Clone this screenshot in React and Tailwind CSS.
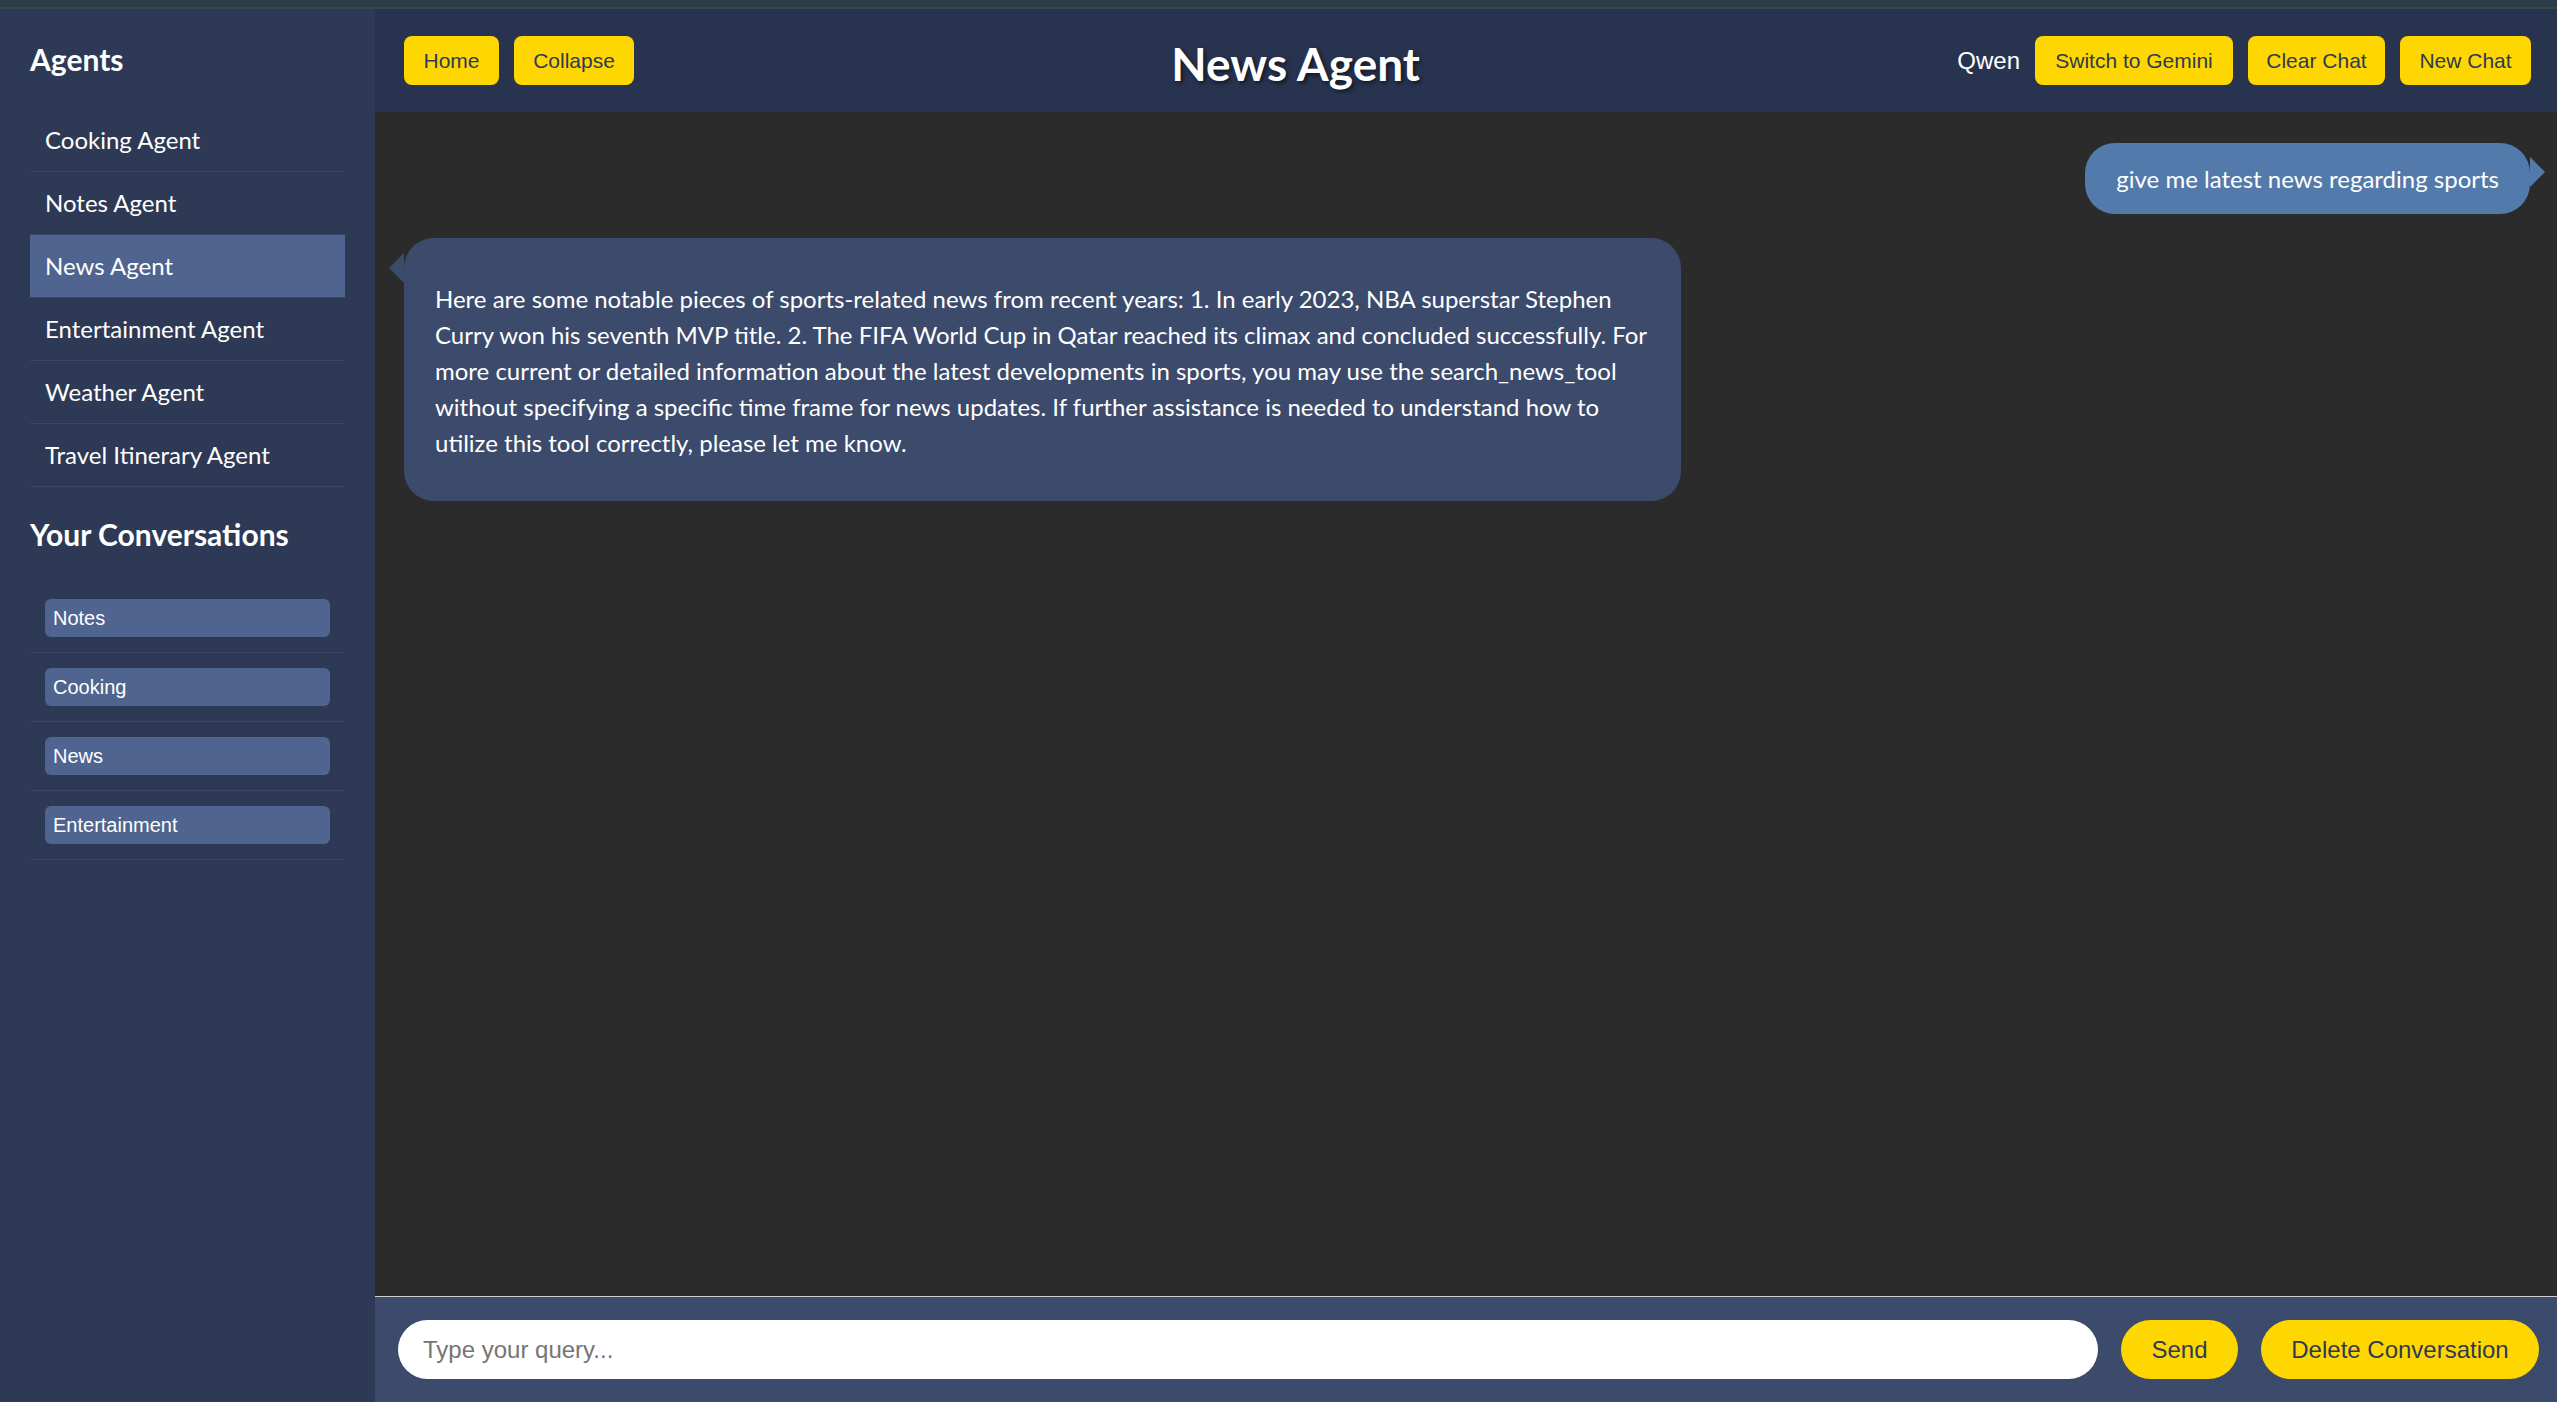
import React from 'react';

const AGENTS = [
  'Cooking Agent',
  'Notes Agent',
  'News Agent',
  'Entertainment Agent',
  'Weather Agent',
  'Travel Itinerary Agent',
];

const CONVERSATIONS = ['Notes', 'Cooking', 'News', 'Entertainment'];

const BOT_LINES = [
  'Here are some notable pieces of sports-related news from recent years: 1. In early 2023, NBA superstar Stephen',
  'Curry won his seventh MVP title. 2. The FIFA World Cup in Qatar reached its climax and concluded successfully. For',
  'more current or detailed information about the latest developments in sports, you may use the search_news_tool',
  'without specifying a specific time frame for news updates. If further assistance is needed to understand how to',
  'utilize this tool correctly, please let me know.',
];

const sans = "font-['Lato','Noto_Sans',sans-serif]";
const arial = "font-['Liberation_Sans',Arial,sans-serif]";

const YellowButton = ({ children, className = '' }) => (
  <button
    className={`h-[49px] rounded-[8px] bg-[#ffd700] text-[21px] text-[#2e3a55] ${arial} ${className}`}
  >
    {children}
  </button>
);

const App = () => {
  const active = 'News Agent';

  return (
    <div className={`flex h-[1402px] w-full flex-col overflow-hidden bg-[#2b2b2b] ${sans}`}>
      {/* top strip */}
      <div className="h-[7px] bg-[#2b3d47]" />
      <div className="h-[2px] bg-[#3a4548]" />

      <div className="flex min-h-0 flex-1">
        {/* Sidebar */}
        <aside className="w-[375px] shrink-0 bg-[#2e3a55] px-[30px] pt-[33px]">
          <h3 className="text-[30px] font-bold leading-[34px] text-white">Agents</h3>
          <ul className="mt-[33px]">
            {AGENTS.map((name) => (
              <li
                key={name}
                className={`flex h-[63px] items-center border-b border-[#3a4766] pl-[15px] text-[24px] text-white ${
                  name === active ? 'bg-[#4f6590]' : ''
                }`}
              >
                {name}
              </li>
            ))}
          </ul>

          <h3 className="mt-[30px] text-[30px] font-bold leading-[34px] text-white">
            Your Conversations
          </h3>
          <ul className="mt-[33px]">
            {CONVERSATIONS.map((c) => (
              <li key={c} className="border-b border-[#3a4766] px-[15px] py-[15px]">
                <button
                  className={`h-[38px] w-full rounded-[6px] bg-[#4f6590] px-[8px] text-left text-[20px] text-white ${arial}`}
                >
                  {c}
                </button>
              </li>
            ))}
          </ul>
        </aside>

        {/* Main */}
        <main className="flex min-w-0 flex-1 flex-col">
          {/* Header */}
          <header className="flex h-[103px] shrink-0 items-center justify-between bg-[#283350] pl-[29px] pr-[26px]">
            <div className="flex items-center gap-[15px]">
              <YellowButton className="w-[95px]">Home</YellowButton>
              <YellowButton className="w-[120px]">Collapse</YellowButton>
            </div>
            <h1 className="mt-[6px] text-[46px] font-bold leading-none text-white [text-shadow:2px_2px_4px_rgba(0,0,0,0.6)]">
              News Agent
            </h1>
            <div className="flex items-center gap-[15px]">
              <span className={`text-[24px] text-white ${arial}`}>Qwen</span>
              <YellowButton className="w-[198px]">Switch to Gemini</YellowButton>
              <YellowButton className="w-[137px]">Clear Chat</YellowButton>
              <YellowButton className="w-[131px]">New Chat</YellowButton>
            </div>
          </header>

          {/* Chat */}
          <section className="flex min-h-0 flex-1 flex-col bg-[#2b2b2b] pl-[29px] pr-[27px] pt-[31px]">
            <div className="flex justify-end">
              <div className="relative flex h-[71px] items-center rounded-[30px] bg-[#527aab] px-[31px] text-[24px] text-white">
                give me latest news regarding sports
                <span className="absolute right-[-15px] top-[14px] h-0 w-0 border-y-[15px] border-l-[15px] border-y-transparent border-l-[#527aab]" />
              </div>
            </div>

            <div className="mt-[24px] flex">
              <div className="relative w-[1277px] rounded-[30px] bg-[#3c4a6b] pb-[40px] pl-[31px] pr-[20px] pt-[43px] text-[24px] leading-[36px] text-white">
                {BOT_LINES.map((line) => (
                  <span key={line} className="block whitespace-nowrap">
                    {line}
                  </span>
                ))}
                <span className="absolute left-[-15px] top-[15px] h-0 w-0 border-y-[15px] border-r-[15px] border-y-transparent border-r-[#3c4a6b]" />
              </div>
            </div>
          </section>

          {/* Input bar */}
          <footer className="flex h-[106px] shrink-0 items-center gap-[23px] border-t border-[#cfcfcf] bg-[#3c4a6b] pl-[23px] pr-[18px]">
            <input
              type="text"
              placeholder="Type your query..."
              className={`h-[59px] min-w-0 flex-1 rounded-full bg-white px-[25px] text-[24px] text-[#333] outline-none placeholder:text-[#757575] ${arial}`}
            />
            <button
              className={`h-[59px] w-[117px] shrink-0 rounded-full bg-[#ffd700] text-[24px] text-[#2e3a55] ${arial}`}
            >
              Send
            </button>
            <button
              className={`h-[59px] w-[278px] shrink-0 rounded-full bg-[#ffd700] text-[24px] text-[#2e3a55] ${arial}`}
            >
              Delete Conversation
            </button>
          </footer>
        </main>
      </div>
    </div>
  );
};

export default App;
